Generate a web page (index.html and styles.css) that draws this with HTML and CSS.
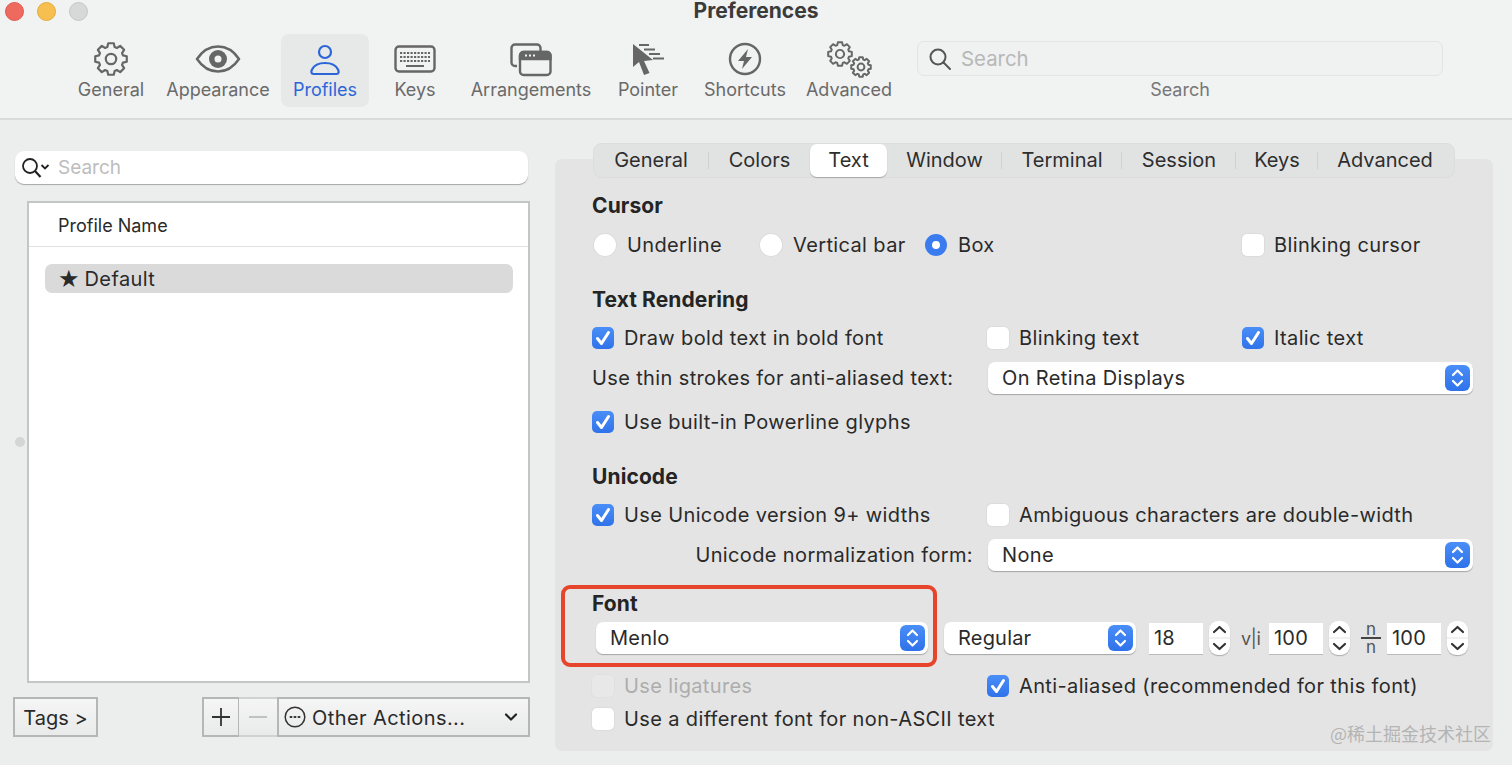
FILE: index.html
```html
<!DOCTYPE html>
<html lang="en">
<head>
<meta charset="utf-8">
<title>Preferences</title>
<link rel="stylesheet" href="styles.css">
</head>
<body>
<svg class="defs" width="0" height="0" aria-hidden="true">
  <defs>
    <path id="gear" d="M-3.65-11.95-2.78-15.76H2.78L3.65-11.95 5.87-11.03 9.18-13.11 13.11-9.18 11.03-5.87 11.95-3.65 15.76-2.78V2.78L11.95 3.65 11.03 5.87 13.11 9.18 9.18 13.11 5.87 11.03 3.65 11.95 2.78 15.76H-2.78L-3.65 11.95-5.87 11.03-9.18 13.11-13.11 9.18-11.03 5.87-11.95 3.65-15.76 2.78V-2.78L-11.95-3.65-11.03-5.87-13.11-9.18-9.18-13.11-5.87-11.03Z"/>
    <symbol id="updown" viewBox="0 0 24 26"><path d="M7.5 10 12 5.5 16.5 10M7.5 16 12 20.5 16.5 16" fill="none" stroke="#fff" stroke-width="2.2" stroke-linecap="round" stroke-linejoin="round"/></symbol>
    <symbol id="tick" viewBox="0 0 22 22"><path d="M5.5 11.5 9.5 16.5 16.5 5.5" fill="none" stroke="#fff" stroke-width="3" stroke-linecap="round" stroke-linejoin="round"/></symbol>
    <symbol id="stepper" viewBox="0 0 21 34"><path d="M5 11 10.5 6 16 11M5 23 10.5 28 16 23" fill="none" stroke="#333" stroke-width="2.2" stroke-linecap="round" stroke-linejoin="round"/><path d="M0 17H21" stroke="#e3e3e3"/></symbol>
  </defs>
</svg>
<div class="window">
  <header class="header">
    <div class="titlebar">
      <div class="lights"><span class="light red"></span><span class="light yellow"></span><span class="light gray"></span></div>
      <div class="title">Preferences</div>
    </div>
    <div class="toolbar">
      <nav class="tools">
        <div class="tool"><div class="tool-icon">
          <svg width="36" height="36" viewBox="-18 -18 36 36" fill="none" stroke="#666" stroke-width="2.2" stroke-linejoin="round"><use href="#gear"/><circle r="5.2"/></svg>
        </div><span>General</span></div>
        <div class="tool"><div class="tool-icon">
          <svg width="48" height="32" viewBox="0 0 48 32"><path d="M3 16C9 7 16 3.5 24 3.5S39 7 45 16C39 25 32 28.500 24 28.500S9 25 3 16Z" fill="none" stroke="#666" stroke-width="2.400"/><circle cx="24" cy="16" r="9" fill="#666"/><circle cx="24" cy="16" r="3.500" fill="#f1f2f2"/></svg>
        </div><span>Appearance</span></div>
        <div class="tool active"><div class="tool-icon">
          <svg width="32" height="36" viewBox="0 0 32 36" fill="none" stroke="#2b66d9" stroke-width="2.200"><circle cx="16" cy="11" r="6"/><path d="M4.500 33H27.500C30 33 30 30.500 29 28.500 27 24.500 22 22 16 22S5 24.500 3 28.500C2 30.500 2 33 4.500 33Z"/></svg>
        </div><span>Profiles</span></div>
        <div class="tool"><div class="tool-icon">
          <svg width="42" height="28" viewBox="0 0 42 28" fill="none" stroke="#666"><rect x="1.500" y="1.500" width="39" height="25" rx="3.500" stroke-width="2.400"/><path d="M6 8H36M6 12H36M6 16H36" stroke-width="2.200" stroke-dasharray="2.200 1.300"/><path d="M12 21H30" stroke-width="2"/></svg>
        </div><span>Keys</span></div>
        <div class="tool"><div class="tool-icon">
          <svg width="44" height="36" viewBox="0 0 44 36" fill="none" stroke="#666" stroke-width="2.400"><path d="M8 25H6A3.500 3.500 0 0 1 2.500 21.500V7A3.500 3.500 0 0 1 6 3.500H28A3.500 3.500 0 0 1 31.500 7V10"/><rect x="11" y="11" width="30.500" height="23" rx="3.500"/><path d="M11 14.500A3.500 3.500 0 0 1 14.500 11H38A3.500 3.500 0 0 1 41.500 14.500V18H11Z" fill="#666"/><path d="M16 14.500H27" stroke="#f1f2f2" stroke-width="2" stroke-dasharray="2 2"/></svg>
        </div><span>Arrangements</span></div>
        <div class="tool"><div class="tool-icon">
          <svg width="36" height="36" viewBox="0 0 36 36" fill="#666"><path d="M3 3V26L9 21 14 34 19.500 32 14 20 23 19Z"/><path d="M9 4H19M14 8.500H25M19 13H30M23 17.500H34" stroke="#666" stroke-width="2" fill="none"/></svg>
        </div><span>Pointer</span></div>
        <div class="tool"><div class="tool-icon">
          <svg width="34" height="34" viewBox="0 0 34 34"><circle cx="17" cy="17" r="15" fill="none" stroke="#666" stroke-width="2.400"/><path d="M20 7 10 19H16L14 27 24 15H18Z" fill="#666"/></svg>
        </div><span>Shortcuts</span></div>
        <div class="tool"><div class="tool-icon">
          <svg width="48" height="40" viewBox="0 0 48 40" fill="none" stroke="#666" stroke-width="2.600" stroke-linejoin="round"><g transform="translate(15 15) scale(.75)"><use href="#gear"/><circle r="5.500"/></g><g transform="translate(36 28) scale(.62)" stroke-width="3.200"><use href="#gear"/><circle r="5.500"/></g></svg>
        </div><span>Advanced</span></div>
      </nav>
      <div class="top-search">
        <div class="top-search-field">
          <svg width="24" height="24" viewBox="0 0 24 24" fill="none" stroke="#555" stroke-width="2"><circle cx="10" cy="10" r="7.500"/><path d="M15.500 15.500 22 22" stroke-linecap="round"/></svg>
          <span>Search</span>
        </div>
        <div class="top-search-label">Search</div>
      </div>
    </div>
  </header>
  <main class="main">
    <span class="split-dot"></span>
    <aside class="left">
      <div class="profile-search">
        <svg width="30" height="24" viewBox="0 0 30 24" fill="none" stroke="#222" stroke-width="1.800"><circle cx="9" cy="10" r="7"/><path d="M14 15 19.500 21" stroke-width="2.200"/><path d="M20.500 9 24 12.500 27.500 9" stroke-width="1.800"/></svg>
        <span>Search</span>
      </div>
      <section class="profile-list">
        <div class="profile-head">Profile Name</div>
        <div class="profile-row"><span class="star">★</span><span>Default</span></div>
      </section>
      <div class="left-actions">
        <button class="btn tags">Tags &gt;</button>
        <div class="btn-group">
          <button class="btn square">
            <svg width="18" height="18" viewBox="0 0 18 18" stroke="#333" stroke-width="1.800"><path d="M9 0V18M0 9H18"/></svg>
          </button>
          <button class="btn square off">
            <svg width="18" height="18" viewBox="0 0 18 18" stroke="#bcbcbc" stroke-width="1.800"><path d="M0 9H18"/></svg>
          </button>
          <button class="btn other">
            <svg width="22" height="22" viewBox="0 0 22 22" fill="none" stroke="#333" stroke-width="1.500"><circle cx="11" cy="11" r="9.800"/><path d="M6.500 11H7.500M10.500 11H11.500M14.500 11H15.500" stroke-width="2" stroke-linecap="round"/></svg>
            <span class="other-text">Other Actions...</span>
            <svg width="14" height="10" viewBox="0 0 14 10" fill="none" stroke="#222" stroke-width="2.200" stroke-linecap="round" stroke-linejoin="round"><path d="M2 2.500 7 7.500 12 2.500"/></svg>
          </button>
        </div>
      </div>
    </aside>
    <section class="right">
      <div class="panel">
        <div class="tabs">
          <div class="tab sep">General</div>
          <div class="tab">Colors</div>
          <div class="tab selected">Text</div>
          <div class="tab sep">Window</div>
          <div class="tab sep">Terminal</div>
          <div class="tab sep">Session</div>
          <div class="tab sep">Keys</div>
          <div class="tab">Advanced</div>
        </div>

        <h3 class="heading first">Cursor</h3>
        <div class="row radios">
          <label class="opt"><span class="radio"></span>Underline</label>
          <label class="opt"><span class="radio"></span>Vertical bar</label>
          <label class="opt"><span class="radio on"></span>Box</label>
          <label class="opt"><span class="box"></span>Blinking cursor</label>
        </div>

        <h3 class="heading h-rendering">Text Rendering</h3>
        <div class="row gap-9">
          <label class="opt"><span class="box on"><svg><use href="#tick"/></svg></span>Draw bold text in bold font</label>
          <label class="opt"><span class="box"></span>Blinking text</label>
          <label class="opt"><span class="box on"><svg><use href="#tick"/></svg></span>Italic text</label>
        </div>
        <div class="row gap-9">
          <div>Use thin strokes for anti-aliased text:</div>
          <div class="select wide"><span>On Retina Displays</span><span class="sel-btn"><svg><use href="#updown"/></svg></span></div>
        </div>
        <div class="row gap-15">
          <label class="opt"><span class="box on"><svg><use href="#tick"/></svg></span>Use built-in Powerline glyphs</label>
        </div>

        <h3 class="heading h-unicode">Unicode</h3>
        <div class="row gap-9">
          <label class="opt"><span class="box on"><svg><use href="#tick"/></svg></span>Use Unicode version 9+ widths</label>
          <label class="opt span2"><span class="box"></span>Ambiguous characters are double-width</label>
        </div>
        <div class="row gap-9">
          <div class="right-label">Unicode normalization form:</div>
          <div class="select wide"><span>None</span><span class="sel-btn"><svg><use href="#updown"/></svg></span></div>
        </div>

        <h3 class="heading h-font">Font</h3>
        <div class="font-row">
          <div class="select menlo"><span>Menlo</span><span class="sel-btn"><svg><use href="#updown"/></svg></span></div>
          <div class="select regular"><span>Regular</span><span class="sel-btn"><svg><use href="#updown"/></svg></span></div>
          <div class="num-group first-num">
            <div class="num">18</div>
            <svg class="stepper"><use href="#stepper"/></svg>
          </div>
          <div class="num-group">
            <span class="vli">v|i</span>
            <div class="num">100</div>
            <svg class="stepper"><use href="#stepper"/></svg>
          </div>
          <div class="num-group">
            <span class="nn"><span>n</span><span>n</span></span>
            <div class="num">100</div>
            <svg class="stepper"><use href="#stepper"/></svg>
          </div>
        </div>
        <div class="row gap-18">
          <label class="opt disabled"><span class="box"></span>Use ligatures</label>
          <label class="opt span2"><span class="box on"><svg><use href="#tick"/></svg></span>Anti-aliased (recommended for this font)</label>
        </div>
        <div class="row gap-3">
          <label class="opt span2"><span class="box"></span>Use a different font for non-ASCII text</label>
        </div>

        <div class="highlight"></div>
        <div class="watermark">@稀土掘金技术社区</div>
      </div>
    </section>
  </main>
</div>
</body>
</html>
```

FILE: styles.css
```css
* { box-sizing: border-box; }
html, body { margin: 0; padding: 0; }
body {
  width: 1512px;
  height: 765px;
  overflow: hidden;
  background: #eceeee;
  color: #2a2a2a;
  font-family: Inter, "Noto Sans", "Noto Sans CJK SC", sans-serif;
  font-size: 20px;
}
.defs { position: absolute; }
.window { display: flex; flex-direction: column; height: 765px; }

/* header */
.header {
  height: 120px;
  background: #f1f2f2;
  border-bottom: 2px solid #d9dada;
}
.titlebar {
  display: grid;
  grid-template-columns: 1fr auto 1fr;
  height: 22px;
  align-items: start;
}
.lights { display: flex; gap: 13px; padding: 2px 0 0 5px; }
.light { width: 19px; height: 19px; border-radius: 50%; }
.red { background: #ee6a5f; border: 1px solid #e0584e; }
.yellow { background: #f6bf50; border: 1px solid #e4ab3e; }
.gray { background: #d7d8d8; border: 1px solid #c6c7c7; }
.title { font-size: 21px; line-height: 21px; font-weight: 700; color: #3b3b3b; }

.toolbar { display: flex; padding: 12px 0 0 67px; }
.tools { display: grid; grid-template-columns: 88px 126px 88px 92px 140px 94px 100px 108px; }
.tool {
  display: flex;
  flex-direction: column;
  align-items: center;
  height: 73px;
  font-size: 18px;
  line-height: 22px;
  color: #6a6a6a;
  border-radius: 8px;
}
.tool-icon { height: 49px; margin-bottom: -4px; flex: none; display: flex; align-items: center; justify-content: center; }
.tool.active { background: #e7e8e8; color: #2b66d9; }
.top-search { margin-left: 14px; width: 526px; padding-top: 7px; }
.top-search-field {
  display: flex;
  align-items: center;
  gap: 9px;
  height: 35px;
  padding-left: 10px;
  background: #f0f1f1;
  border: 1px solid #e3e4e4;
  border-radius: 7px;
  font-size: 20.4px;
  color: #b7b8b8;
}
.top-search-label { margin-top: 3px; text-align: center; font-size: 18px; line-height: 22px; color: #777; }

/* main */
.main { position: relative; flex: 1; display: flex; }
.split-dot {
  position: absolute;
  left: 15px;
  top: 317px;
  width: 10px;
  height: 10px;
  border-radius: 50%;
  background: #d4d5d5;
}
.left { width: 555px; padding: 31px 25px 28px 14px; display: flex; flex-direction: column; }
.profile-search {
  display: flex;
  align-items: center;
  gap: 7px;
  margin-left: 1px;
  margin-right: 2px;
  height: 33px;
  padding-left: 6px;
  background: #fff;
  border-radius: 9px;
  box-shadow: 0 1px 1px rgba(0, 0, 0, .3);
  color: #bdbdbd;
  font-size: 19px;
}
.profile-list {
  flex: 1;
  margin: 17px 0 14px 13px;
  background: #fff;
  border: 2px solid #c4c5c5;
}
.profile-head {
  height: 44px;
  padding-left: 29px;
  line-height: 46px;
  font-size: 18px;
  border-bottom: 1px solid #e2e2e2;
}
.profile-row {
  display: flex;
  align-items: center;
  gap: 5px;
  margin: 17px 15px 0 16px;
  height: 29px;
  padding-left: 13px;
  line-height: 28px;
  letter-spacing: .4px;
  background: #dadada;
  border-radius: 7px;
}
.star { font-family: "DejaVu Sans", sans-serif; font-size: 24px; line-height: 24px; letter-spacing: 0; }
.left-actions { display: flex; justify-content: space-between; }
.btn-group { display: flex; }
.btn {
  display: flex;
  align-items: center;
  justify-content: center;
  height: 40px;
  padding: 0;
  font: inherit;
  color: #2a2a2a;
  background: linear-gradient(#f5f5f5, #e9eaea);
  border: 2px solid #b5b6b6;
}
.tags { width: 85px; margin-left: -1px; padding-top: 2px; }
.square { width: 38px; }
.off { width: 38px; margin-left: -1px; border-left: 0; border-right: 0; border-color: #d0d1d1; }
.other { width: 253px; padding: 0 10px 0 5px; }
.other-text { flex: 1; margin-left: 6px; padding-top: 2px; text-align: left; letter-spacing: .42px; }

/* right */
.right { flex: 1; padding: 39px 19px 14px 0; display: flex; }
.panel {
  position: relative;
  flex: 1;
  padding: 0 0 0 37px;
  background: #e4e4e4;
  border-radius: 7px;
}
.tabs {
  display: grid;
  grid-template-columns: 116px 101px 77px 115px 120px 114px 82px 134px;
  grid-template-rows: 33px;
  align-content: center;
  width: 862px;
  height: 35px;
  margin: -16px 0 0 1px;
  background: #e1e3e3;
  box-shadow: inset 0 0 0 1px #dcdddd;
  border-radius: 9px;
  color: #2e2e2e;
}
.tab {
  position: relative;
  display: flex;
  align-items: center;
  justify-content: center;
  line-height: 33px;
}
.tab.sep::after {
  content: "";
  position: absolute;
  right: 0;
  top: 8px;
  width: 1px;
  height: 17px;
  background: #cfd0d0;
}
.tab.selected {
  background: #fff;
  border-radius: 7px;
  box-shadow: 0 1px 1px rgba(0, 0, 0, .25);
}

.heading { margin: 0; height: 30px; line-height: 32px; font-size: 21px; letter-spacing: .1px; font-weight: 700; color: #242424; }
.first { margin-top: 12px; }
.h-rendering { margin-top: 24px; }
.h-unicode { margin-top: 24px; }
.h-font { margin-top: 19px; }

.row {
  display: grid;
  grid-template-columns: 395px 255px 231px;
  align-items: center;
  height: 30px;
  letter-spacing: .37px;
}
.radios { grid-template-columns: 166px 165px 317px 231px; margin-top: 10px; padding-left: 2px; }
.gap-3 { margin-top: 3px; }
.gap-9 { margin-top: 9px; }
.gap-15 { margin-top: 15px; }
.gap-18 { margin-top: 18px; }
.opt { display: flex; align-items: center; gap: 10px; white-space: nowrap; }
.radios .opt { gap: 11px; }
.radios .opt:last-child { gap: 10px; }
.span2 { grid-column: span 2; }
.disabled { color: #adadad; }
.disabled .box { background: #e8e8e8; box-shadow: 0 0 0 1px #e0e0e0; }
.radio, .box {
  flex: none;
  width: 22px;
  height: 22px;
  background: #fff;
  box-shadow: 0 0 0 1px #dcdcdc;
}
.radio { border-radius: 50%; }
.radio.on { background: #fff; border: 7px solid #3a7cf0; box-shadow: none; }
.box { border-radius: 5px; }
.box.on { background: linear-gradient(#4a8ef8, #3073ea); box-shadow: none; }
.box svg { display: block; width: 22px; height: 22px; }
.right-label { text-align: right; padding-right: 14px; white-space: nowrap; }
.select {
  display: flex;
  align-items: center;
  justify-content: space-between;
  height: 32px;
  padding: 0 3px 0 14px;
  background: #fff;
  border-radius: 7px;
  box-shadow: 0 1px 1px rgba(0, 0, 0, .28);
}
.wide { grid-column: span 2; width: 485px; margin-left: 1px; }
.sel-btn {
  width: 25px;
  height: 26px;
  border-radius: 6px;
  background: linear-gradient(#4a8ef8, #2f72ea);
}
.sel-btn svg { display: block; width: 25px; height: 26px; }
.font-row { display: flex; align-items: center; height: 30px; margin-top: 5px; padding-left: 4px; letter-spacing: .2px; }
.menlo { width: 332px; }
.regular { width: 192px; margin-left: 16px; }
.num-group { display: flex; align-items: center; margin-left: 11px; }
.first-num { margin-left: 13px; }
.num {
  width: 54px;
  height: 31px;
  padding-left: 5px;
  line-height: 31px;
  background: #fff;
  box-shadow: 0 1px 0 #bbb;
}
.stepper {
  width: 21px;
  height: 34px;
  margin-left: 6px;
  background: #fff;
  border-radius: 9px;
  box-shadow: 0 1px 1px rgba(0, 0, 0, .25);
}
.vli { width: 28px; font-size: 18px; letter-spacing: -.4px; color: #555; }
.nn {
  display: flex;
  flex-direction: column;
  align-items: center;
  width: 20px;
  margin-right: 6px;
  font-size: 17px;
  line-height: 16px;
  color: #555;
}
.nn span:first-child { border-bottom: 2px solid #444; width: 20px; text-align: center; }

.highlight {
  position: absolute;
  left: 6px;
  top: 426px;
  width: 376px;
  height: 82px;
  border: 4px solid #e6452b;
  border-radius: 9px;
}
.watermark {
  position: absolute;
  right: 2px;
  bottom: 7px;
  font-family: "Noto Sans CJK SC", sans-serif;
  font-size: 18px;
  line-height: 22px;
  color: #b4b4b4;
}
```
